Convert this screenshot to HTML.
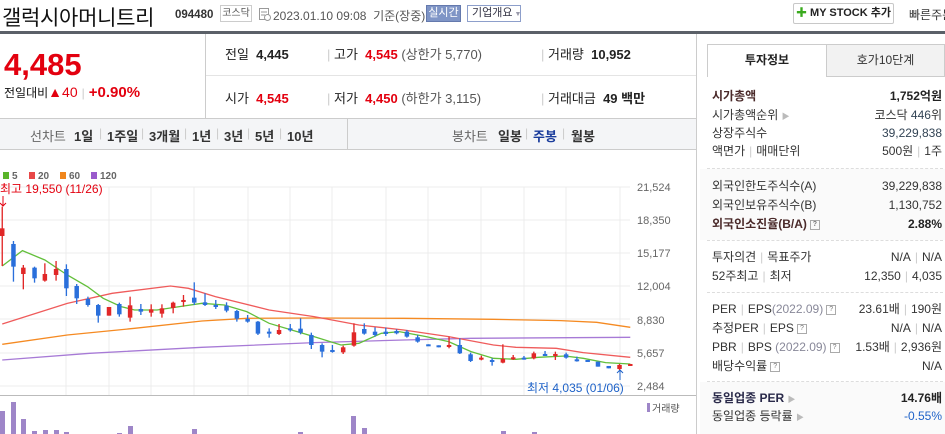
<!DOCTYPE html>
<html><head><meta charset="utf-8">
<style>
*{margin:0;padding:0;box-sizing:border-box}
body{width:945px;height:434px;overflow:hidden;background:#fff;font-family:"Liberation Sans","Noto Sans CJK KR",sans-serif;color:#222;position:relative}
.a{position:absolute;white-space:nowrap}
.r{color:#e3000f}
.b{font-weight:bold}
.row{position:absolute;left:712px;width:230px;font-size:12px;height:18px;line-height:18px}
.row .v{position:absolute;right:0;top:0}
.q{display:inline-block;width:10px;height:10px;border:1px solid #aaa;font-size:7px;line-height:8px;text-align:center;color:#777;vertical-align:middle;margin-left:3px}
.dash{position:absolute;left:707px;width:236px;border-top:1px dashed #ddd}
.sep{color:#ccc;margin:0 4px}
.t{position:absolute;top:126px;font-size:13px;font-weight:bold;color:#333}
.s{position:absolute;top:126px;font-size:12px;color:#ccc}
</style></head><body>
<!-- header -->
<div class="a" style="left:2px;top:2px;font-size:21px;color:#111;letter-spacing:-0.3px">갤럭시아머니트리</div>
<div class="a b" style="left:175px;top:9px;font-size:11.5px;color:#333">094480</div>
<div class="a" style="left:220px;top:5px;width:32px;height:17px;border:1px solid #ccc;font-size:10px;line-height:15px;text-align:center;color:#555">코스닥</div>
<svg class="a" style="left:259px;top:8px" width="12" height="13"><rect x="0.5" y="0.5" width="9" height="11" fill="none" stroke="#999"/><line x1="2" y1="4" x2="8" y2="4" stroke="#999"/><line x1="2" y1="7" x2="6" y2="7" stroke="#999"/><circle cx="8.5" cy="9.5" r="3" fill="#fff" stroke="#999"/></svg>
<div class="a" style="left:273px;top:7px;font-size:12px;color:#555">2023.01.10 09:08 &nbsp;기준(장중)</div>
<div class="a" style="left:426px;top:5px;width:35px;height:17px;background:#7f95c6;border:1px solid #6479ad;color:#fff;font-size:11px;line-height:15px;text-align:center">실시간</div>
<div class="a" style="left:467px;top:5px;width:54px;height:17px;border:1px solid #8d9fcb;color:#334;font-size:11px;line-height:15px;padding-left:4px">기업개요<span style="color:#99a;font-size:7px;margin-left:2px">▼</span></div>
<div class="a b" style="left:793px;top:3px;width:101px;height:21px;border:1px solid #c8c8c8;border-radius:2px;font-size:11px;line-height:19px;text-align:center;color:#222"><span style="color:#3aaa1e">✚</span> MY STOCK 추가</div>
<div class="a" style="left:909px;top:6px;font-size:12px;color:#333">빠른주문</div>
<div class="a" style="left:0;top:31px;width:945px;height:3px;background:#5b6068"></div>
<!-- price -->
<div class="a b r" style="left:4px;top:47px;font-size:31px">4,485</div>
<div class="a" style="left:4px;top:84px;font-size:12px;color:#111">전일대비<span class="r" style="font-size:14px">▲40</span><span class="sep">|</span><span class="r b" style="font-size:15px">+0.90%</span></div>
<div class="a" style="left:205px;top:34px;width:1px;height:84px;background:#ccc"></div>
<div class="a" style="left:206px;top:75px;width:490px;height:1px;background:#e4e4e4"></div>
<div class="a" style="left:225px;top:44px;font-size:13px">전일&nbsp; <b>4,445</b></div>
<div class="a" style="left:225px;top:88px;font-size:13px">시가&nbsp; <b class="r">4,545</b></div>
<div class="a" style="left:327px;top:44px;font-size:13px"><span style="color:#ccc">|</span> 고가&nbsp; <b class="r">4,545</b> <span style="color:#555">(상한가 5,770)</span></div>
<div class="a" style="left:327px;top:88px;font-size:13px"><span style="color:#ccc">|</span> 저가&nbsp; <b class="r">4,450</b> <span style="color:#555">(하한가 3,115)</span></div>
<div class="a" style="left:541px;top:44px;font-size:13px"><span style="color:#ccc">|</span> 거래량&nbsp; <b>10,952</b></div>
<div class="a" style="left:541px;top:88px;font-size:13px"><span style="color:#ccc">|</span> 거래대금&nbsp; <b>49 백만</b></div>
<!-- tab bar -->
<div class="a" style="left:0;top:118px;width:696px;height:32px;background:#f4f5f7;border-top:1px solid #ccc;border-bottom:1px solid #ccc"></div>
<div class="a" style="left:347px;top:119px;width:1px;height:30px;background:#ccc"></div>
<div class="t" style="left:30px;color:#666;font-weight:normal">선차트</div>
<div class="t" style="left:74px">1일</div><div class="s" style="left:99px">|</div>
<div class="t" style="left:107px">1주일</div><div class="s" style="left:141px">|</div>
<div class="t" style="left:149px">3개월</div><div class="s" style="left:184px">|</div>
<div class="t" style="left:192px">1년</div><div class="s" style="left:216px">|</div>
<div class="t" style="left:224px">3년</div><div class="s" style="left:247px">|</div>
<div class="t" style="left:255px">5년</div><div class="s" style="left:279px">|</div>
<div class="t" style="left:287px">10년</div>
<div class="t" style="left:452px;color:#666;font-weight:normal">봉차트</div>
<div class="t" style="left:498px">일봉</div><div class="s" style="left:525px">|</div>
<div class="t" style="left:533px;color:#1a3c9c">주봉</div><div class="s" style="left:562px">|</div>
<div class="t" style="left:571px">월봉</div>
<!-- chart -->
<svg class="a" style="left:0;top:150px" width="696" height="284">
<g transform="translate(0,-150)">
<g stroke="#ececec" stroke-width="1">
<line x1="0" y1="187" x2="630" y2="187"/><line x1="0" y1="220" x2="630" y2="220"/><line x1="0" y1="253" x2="630" y2="253"/><line x1="0" y1="286" x2="630" y2="286"/><line x1="0" y1="319" x2="630" y2="319"/><line x1="0" y1="353" x2="630" y2="353"/><line x1="0" y1="386" x2="630" y2="386"/>
<line x1="66" y1="187" x2="66" y2="396"/><line x1="109" y1="187" x2="109" y2="396"/><line x1="151" y1="187" x2="151" y2="396"/><line x1="194" y1="187" x2="194" y2="396"/><line x1="248" y1="187" x2="248" y2="396"/><line x1="290" y1="187" x2="290" y2="396"/><line x1="332" y1="187" x2="332" y2="396"/><line x1="386" y1="187" x2="386" y2="396"/><line x1="428" y1="187" x2="428" y2="396"/><line x1="481" y1="187" x2="481" y2="396"/><line x1="524" y1="187" x2="524" y2="396"/><line x1="566" y1="187" x2="566" y2="396"/><line x1="620" y1="187" x2="620" y2="396"/>
</g>
<line x1="0" y1="395.5" x2="696" y2="395.5" stroke="#bbb"/>
<g font-size="11" fill="#666" font-family="Liberation Sans,sans-serif"><text x="637" y="191">21,524</text><text x="637" y="224">18,350</text><text x="637" y="257">15,177</text><text x="637" y="290">12,004</text><text x="637" y="324">8,830</text><text x="637" y="357">5,657</text><text x="637" y="390">2,484</text></g>
<g font-size="10" font-weight="bold" fill="#666"><rect x="3" y="172" width="6" height="7" fill="#5ab52a"/><text x="12" y="179">5</text><rect x="29" y="172" width="6" height="7" fill="#e84848"/><text x="38" y="179">20</text><rect x="60" y="172" width="6" height="7" fill="#f0861c"/><text x="69" y="179">60</text><rect x="91" y="172" width="6" height="7" fill="#9a5bcc"/><text x="100" y="179">120</text></g>
<text x="0" y="193" font-size="12" fill="#e3000f">최고 19,550 (11/26)</text>
<text x="527" y="392" font-size="12" fill="#1e62c8">최저 4,035 (01/06)</text>
<path d="M3 196v10M0 203l3 3 3-3" stroke="#e3000f" fill="none"/>
<path d="M620 380v-10M617 373l3-3 3 3" stroke="#1e62c8" fill="none"/>
<text x="652" y="412" font-size="10" fill="#555">거래량</text><rect x="647" y="403" width="3" height="9" fill="#9e86c8"/>
<g transform="matrix(0.4486,0,0,0.3333,0,160)" fill="none" stroke-width="1.3">
<polyline vector-effect="non-scaling-stroke" stroke="#a77ad6" points="5,600 200,580 450,562 700,548 900,540 1050,535 1405,532"/>
<polyline vector-effect="non-scaling-stroke" stroke="#f58a22" points="5,553 150,525 300,505 450,483 550,475 700,474 900,475 1100,478 1250,482 1330,487 1405,502"/>
<polyline vector-effect="non-scaling-stroke" stroke="#ef5b5b" points="5,492 150,430 250,400 380,378 420,385 480,410 600,450 700,470 800,495 900,510 1000,530 1100,555 1150,562 1240,565 1300,578 1405,592"/>
<polyline vector-effect="non-scaling-stroke" stroke="#62bf3a" points="5,318 50,272 100,300 150,345 195,380 230,415 270,440 300,450 350,450 400,440 450,430 500,435 550,455 600,490 650,510 700,530 760,555 800,550 850,520 890,515 950,530 1000,545 1050,575 1100,595 1150,598 1200,592 1260,588 1300,595 1350,608 1405,612"/>
</g>
<g id="c" transform="matrix(0.4486,0,0,0.3333,0,160)"></g>
<g fill="#9e86c8">
<rect x="0" y="411" width="5" height="23"/><rect x="11" y="402" width="5" height="32"/><rect x="21" y="419" width="5" height="15"/><rect x="32" y="431" width="5" height="3"/><rect x="43" y="430" width="5" height="4"/><rect x="54" y="430" width="5" height="4"/><rect x="64" y="432" width="5" height="2"/><rect x="117" y="433" width="5" height="1"/><rect x="128" y="426" width="5" height="8"/><rect x="192" y="429" width="5" height="5"/><rect x="298" y="432" width="5" height="2"/><rect x="351" y="416" width="5" height="18"/><rect x="362" y="428" width="5" height="6"/><rect x="501" y="431" width="5" height="3"/><rect x="532" y="432" width="5" height="2"/>
</g>
</g>
</svg>
<!-- right panel -->
<div class="a" style="left:696px;top:34px;width:1px;height:400px;background:#ccc"></div>
<div class="a" style="left:707px;top:44px;width:120px;height:33px;border:1px solid #ccc;border-bottom:none;background:#fff;font-size:12px;font-weight:bold;line-height:31px;text-align:center">투자정보</div>
<div class="a" style="left:826px;top:44px;width:119px;height:33px;border:1px solid #ccc;background:#f2f2f2;font-size:12px;line-height:31px;text-align:center;color:#333">호가10단계</div>
<div class="a" style="left:826px;top:76px;width:119px;height:1px;background:#ccc"></div>
<div class="row b" style="top:87px;color:#4a2a2a">시가총액<span class="v" style="color:#222">1,752억원</span></div>
<div class="row" style="top:106px;color:#333">시가총액순위 <span style="color:#bbb;font-size:8px">▶</span><span class="v">코스닥 <span style="color:#345">446</span>위</span></div>
<div class="row" style="top:124px;color:#333">상장주식수<span class="v" style="color:#345">39,229,838</span></div>
<div class="row" style="top:142px;color:#333">액면가<span class="sep">|</span>매매단위<span class="v">500원<span class="sep">|</span>1주</span></div>
<div class="dash" style="top:168px"></div>
<div class="a" style="left:700px;top:169px;width:245px;height:71px;background:#fafafa"></div>
<div class="row" style="top:177px;color:#333">외국인한도주식수(A)<span class="v">39,229,838</span></div>
<div class="row" style="top:196px;color:#333">외국인보유주식수(B)<span class="v">1,130,752</span></div>
<div class="row b" style="top:215px;color:#4a2a2a">외국인소진율(B/A)<span class="q">?</span><span class="v" style="color:#222">2.88%</span></div>
<div class="dash" style="top:240px"></div>
<div class="row" style="top:248px;color:#333">투자의견<span class="sep">|</span>목표주가<span class="v">N/A<span class="sep">|</span>N/A</span></div>
<div class="row" style="top:267px;color:#333">52주최고<span class="sep">|</span>최저<span class="v">12,350<span class="sep">|</span>4,035</span></div>
<div class="dash" style="top:292px"></div>
<div class="row" style="top:300px;color:#333">PER<span class="sep">|</span>EPS<span style="color:#889">(2022.09)</span><span class="q">?</span><span class="v">23.61배<span class="sep">|</span>190원</span></div>
<div class="row" style="top:319px;color:#333">추정PER<span class="sep">|</span>EPS<span class="q">?</span><span class="v">N/A<span class="sep">|</span>N/A</span></div>
<div class="row" style="top:338px;color:#333">PBR<span class="sep">|</span>BPS <span style="color:#889">(2022.09)</span><span class="q">?</span><span class="v">1.53배<span class="sep">|</span>2,936원</span></div>
<div class="row" style="top:357px;color:#333">배당수익률<span class="q">?</span><span class="v">N/A</span></div>
<div class="dash" style="top:381px"></div>
<div class="a" style="left:700px;top:382px;width:245px;height:52px;background:#fafafa"></div>
<div class="row b" style="top:389px;color:#2a2a4a">동일업종 PER <span style="color:#bbb;font-size:8px">▶</span><span class="v" style="color:#222">14.76배</span></div>
<div class="row" style="top:407px;color:#333">동일업종 등락률 <span style="color:#bbb;font-size:8px">▶</span><span class="v" style="color:#1e62c8">-0.55%</span></div>
<script>
var d=[["r",5,205,228,140,318],["b",30,252,320,243,365],["r",52,323,342,315,388],["b",77,323,355,320,368],["r",100,342,362,310,365],["r",125,327,345,303,362],["b",148,327,385,313,408],["b",171,378,415,372,432],["b",196,417,435,410,440],["b",219,435,467,432,488],["r",243,441,467,441,467],["b",266,432,463,428,470],["r",290,436,473,410,485],["b",314,447,455,432,465],["r",337,448,458,433,470],["r",361,445,461,433,473],["r",386,428,444,425,460],["r",409,420,423,405,440],["b",433,413,428,367,435],["b",457,427,435,400,438],["b",481,435,437,420,447],["b",505,437,452,427,457],["b",528,453,476,450,485],["b",552,477,485,465,488],["b",575,485,521,483,525],["b",600,515,520,505,533],["r",622,510,522,492,525],["b",647,505,510,492,515],["b",670,506,518,475,523],["b",694,525,555,518,567],["b",718,555,575,550,592],["b",741,570,576,555,578],["r",765,562,577,557,582],["r",789,517,557,490,560],["b",812,507,521,490,524],["b",836,515,525,502,530],["b",860,515,522,503,528],["b",884,513,520,508,523],["b",907,515,530,510,533],["b",931,532,545,525,548],["b",955,553,556,553,556],["b",978,556,562,556,562],["r",1001,555,561,530,565],["b",1025,555,580,535,582],["b",1049,583,603,578,606],["r",1073,593,599,587,601],["b",1097,600,604,595,617],["r",1121,597,608,553,610],["r",1144,592,597,585,600],["b",1168,593,596,588,599],["r",1190,580,595,575,598],["b",1215,582,587,573,588],["r",1238,582,586,575,600],["b",1262,583,593,578,596],["b",1286,598,602,590,605],["b",1310,600,604,600,604],["b",1333,605,620,605,620],["b",1357,618,625,618,625],["r",1381,615,627,612,630],["r",1405,612,616,612,616]];
var s="";d.forEach(function(c){var col=c[0]=="r"?"#e12727":"#2a6fdb";var h=Math.max(c[3]-c[2],6);s+='<line x1="'+c[1]+'" x2="'+c[1]+'" y1="'+c[4]+'" y2="'+c[5]+'" stroke="'+col+'" stroke-width="3"/><rect x="'+(c[1]-5)+'" y="'+c[2]+'" width="10" height="'+h+'" fill="'+col+'"/>';});
document.getElementById("c").innerHTML=s;
</script>
</body></html>
